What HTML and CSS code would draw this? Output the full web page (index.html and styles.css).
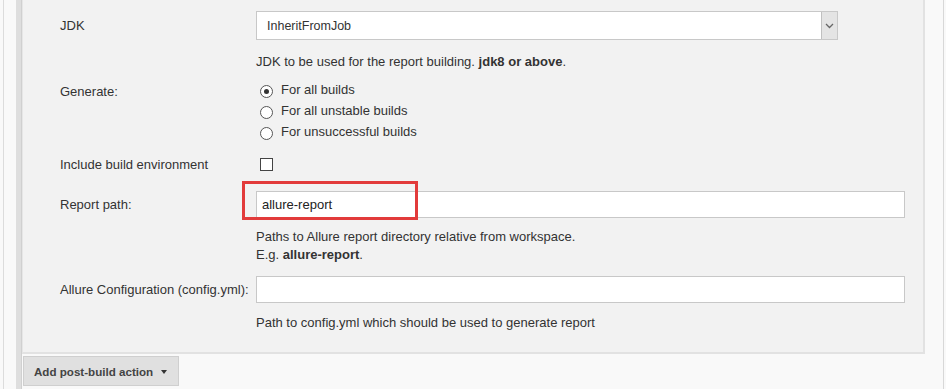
FILE: index.html
```html
<!DOCTYPE html>
<html lang="en">
<head>
    <meta charset="UTF-8">
    <title>Allure Report - post-build</title>
    <link rel="stylesheet" href="styles.css">
</head>
<body>

<div class="page">
    <div class="gutter">
        <div class="gutter-line"></div>
        <div class="gutter-bar"></div>
    </div>

    <div class="main">
        <div class="section">
            <div class="row row-select">
                <div class="label">JDK</div>
                <div class="field">
                    <div class="select">
                        <span class="select-text">InheritFromJob</span>
                        <span class="select-arrow">
                            <svg width="9" height="6" viewBox="0 0 9 6"><path d="M1 1 L4.5 4.5 L8 1" fill="none" stroke="#666" stroke-width="1.3"/></svg>
                        </span>
                    </div>
                </div>
            </div>
            <div class="help">JDK to be used for the report building. <b>jdk8 or above</b>.</div>

            <div class="row row-radio">
                <div class="label">Generate:</div>
                <div class="field radios">
                    <label class="radio"><span class="dot checked"></span>For all builds</label>
                    <label class="radio"><span class="dot"></span>For all unstable builds</label>
                    <label class="radio"><span class="dot"></span>For unsuccessful builds</label>
                </div>
            </div>

            <div class="row row-check">
                <div class="label">Include build environment</div>
                <div class="field"><span class="checkbox"></span></div>
            </div>

            <div class="row row-input">
                <div class="label">Report path:</div>
                <div class="field">
                    <div class="input">allure-report</div>
                    <div class="mark"></div>
                </div>
            </div>
            <div class="help help-two">Paths to Allure report directory relative from workspace.<br>E.g. <b>allure-report</b>.</div>

            <div class="row row-input row-config">
                <div class="label">Allure Configuration (config.yml):</div>
                <div class="field">
                    <div class="input"></div>
                </div>
            </div>
            <div class="help help-last">Path to config.yml which should be used to generate report</div>
        </div>

        <div class="actions">
            <button class="btn-add">Add post-build action<span class="caret"></span></button>
        </div>
    </div>

    <div class="right-edge"></div>
</div>

</body>
</html>
```

FILE: styles.css
```css
body {
    margin: 0;
    font-family: "Liberation Sans", Arial, sans-serif;
    font-size: 13px;
    color: #333;
    background-color: #f9f9f9;
}
.page {
    display: flex;
    height: 389px;
    overflow: hidden;
}
.gutter {
    width: 22px;
    display: flex;
    flex-shrink: 0;
}
.gutter-line {
    width: 1px;
    margin-left: 3px;
    background-color: #dcdcdc;
}
.gutter-bar {
    width: 5px;
    margin-left: 12px;
    background-color: #dedede;
    border-right: 1px solid #d0d0d0;
}
.main {
    width: 903px;
    flex-shrink: 0;
}
.section {
    background-color: #f2f2f2;
    border-left: 1px solid #e6e6e6;
    border-right: 2px solid #e2e2e2;
    border-bottom: 2px solid #e2e2e2;
    padding: 11px 0 21px 0;
    height: 320px;
}
.row {
    display: flex;
    align-items: center;
}
.label {
    width: 196px;
    padding-left: 37px;
    flex-shrink: 0;
}
.field {
    flex: 1;
    padding-right: 18px;
    position: relative;
}
.select {
    display: flex;
    align-items: center;
    width: 580px;
    height: 27px;
    background-color: #fff;
    border: 1px solid #c8c8c8;
    font-size: 12.5px;
}
.select-text {
    flex: 1;
    padding-left: 10px;
}
.select-arrow {
    width: 15px;
    height: 27px;
    display: flex;
    align-items: center;
    justify-content: center;
    background-color: #e4e4e4;
    border-left: 1px solid #c0c0c0;
}
.help {
    padding-left: 233px;
    margin-top: 13px;
    line-height: 18px;
}
.row-radio {
    align-items: flex-start;
    margin-top: 8px;
}
.row-radio .label {
    padding-top: 5px;
}
.radios {
    display: flex;
    flex-direction: column;
}
.radio {
    display: flex;
    align-items: center;
    height: 21px;
    padding-left: 4px;
}
.dot {
    width: 11px;
    height: 11px;
    border: 1px solid #555;
    border-radius: 50%;
    background-color: #fff;
    margin-right: 8px;
    margin-top: 3px;
    position: relative;
}
.dot.checked::after {
    content: "";
    position: absolute;
    left: 3px;
    top: 3px;
    width: 5px;
    height: 5px;
    border-radius: 50%;
    background-color: #333;
}
.row-check {
    margin-top: 15px;
}
.checkbox {
    display: block;
    width: 11px;
    height: 11px;
    margin-left: 4px;
    border: 1px solid #444;
    background-color: #fff;
}
.row-input {
    margin-top: 19px;
}
.input {
    height: 25px;
    line-height: 25px;
    background-color: #fff;
    border: 1px solid #c8c8c8;
    padding-left: 5px;
    font-size: 13px;
    color: #222;
}
.mark {
    position: absolute;
    left: -14px;
    top: -10px;
    width: 170px;
    height: 33px;
    border: 3px solid #e23b3b;
}
.help-two {
    margin-top: 10px;
}
.row-config {
    margin-top: 12px;
}
.help-last {
    margin-top: 11px;
}
.actions {
    padding: 2px 0 0 1px;
}
.btn-add {
    font-family: "Liberation Sans", Arial, sans-serif;
    font-size: 11.6px;
    font-weight: bold;
    color: #444;
    background-color: #e0e0e0;
    border: 1px solid #cfcfcf;
    height: 30px;
    width: 156px;
    padding: 0 0 0 10px;
    text-align: left;
    white-space: nowrap;
}
.caret {
    display: inline-block;
    margin-left: 8px;
    vertical-align: 2px;
    border-left: 3.5px solid transparent;
    border-right: 3.5px solid transparent;
    border-top: 4px solid #333;
}
.right-edge {
    width: 1px;
    margin-left: 18px;
    background-color: #d8d8d8;
}
```
